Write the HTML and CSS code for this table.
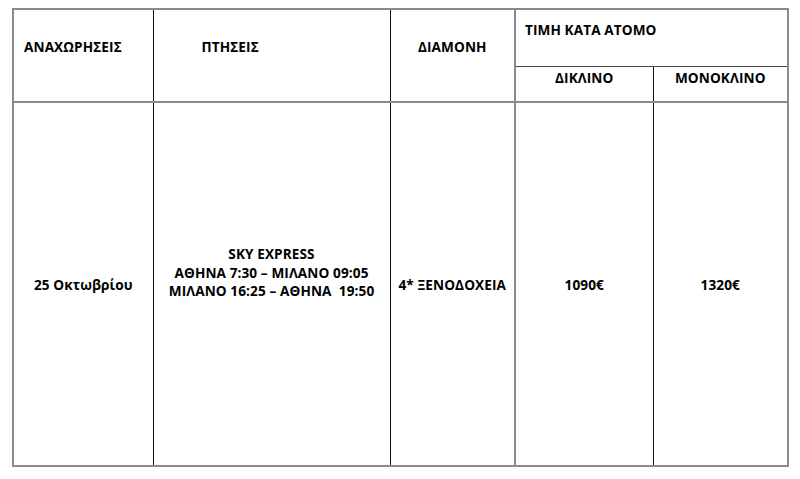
FILE: index.html
```html
<!DOCTYPE html>
<html lang="el">
<head>
<meta charset="utf-8">
<title>Αναχωρήσεις</title>
<link rel="stylesheet" href="styles.css">
</head>
<body>
<table class="tours">
  <colgroup>
    <col class="c-dep">
    <col class="c-fly">
    <col class="c-stay">
    <col class="c-dbl">
    <col class="c-sgl">
  </colgroup>
  <thead>
    <tr class="h1">
      <th rowspan="2" class="th-dep">ΑΝΑΧΩΡΗΣΕΙΣ</th>
      <th rowspan="2" class="th-fly">ΠΤΗΣΕΙΣ</th>
      <th rowspan="2" class="th-stay">ΔΙΑΜΟΝΗ</th>
      <th colspan="2" class="th-price">ΤΙΜΗ ΚΑΤΑ ΑΤΟΜΟ</th>
    </tr>
    <tr class="h2">
      <th class="th-dbl">ΔΙΚΛΙΝΟ</th>
      <th class="th-sgl">ΜΟΝΟΚΛΙΝΟ</th>
    </tr>
  </thead>
  <tbody>
    <tr class="body-row">
      <td class="td-dep">25 Οκτωβρίου</td>
      <td class="td-fly">SKY EXPRESS<br>ΑΘΗΝΑ 7:30 – ΜΙΛΑΝΟ 09:05<br>ΜΙΛΑΝΟ 16:25 – ΑΘΗΝΑ&nbsp; 19:50</td>
      <td class="td-stay">4* ΞΕΝΟΔΟΧΕΙΑ</td>
      <td class="td-dbl">1090€</td>
      <td class="td-sgl">1320€</td>
    </tr>
  </tbody>
</table>
</body>
</html>
```

FILE: styles.css
```css
html, body {
  margin: 0;
  padding: 0;
  background: #ffffff;
}

body {
  font-family: "Open Sans", "Noto Sans", "Liberation Sans", sans-serif;
  font-weight: 700;
  font-size: 13.6px;
  letter-spacing: 0.1px;
  color: #000;
  line-height: 18.5px;
}

.tours {
  margin: 8px 0 0 12px;
  border-collapse: collapse;
  table-layout: fixed;
  width: 775px;
  border: 2px solid #8a8a8a;
}

.c-dep { width: 140px; }
.c-fly { width: 237px; }
.c-stay { width: 125px; }
.c-dbl { width: 138px; }
.c-sgl { width: 135px; }

.tours th,
.tours td {
  border: 1px solid #111;
  padding: 0;
  font-weight: 700;
}

.h1 { height: 57px; }
.h2 { height: 36px; }
.body-row { height: 364px; }

.tours thead th {
  vertical-align: top;
  border-bottom: 2px solid #8a8a8a;
}

.th-dep {
  text-align: left;
  padding: 28px 0 0 10px !important;
}

.th-fly {
  text-align: left;
  padding: 28px 0 0 48px !important;
}

.th-stay {
  text-align: center;
  padding: 28px 0 0 !important;
}

.th-price {
  text-align: left;
  padding: 11px 0 0 9px !important;
  border-bottom: 1px solid #444 !important;
  border-left: 2px solid #8a8a8a !important;
}

.th-dbl,
.th-sgl {
  text-align: center;
  padding: 2px 0 0 !important;
}

.th-dbl {
  border-left: 2px solid #8a8a8a !important;
}

.tours td {
  vertical-align: middle;
  text-align: center;
}

.td-dep,
.td-stay,
.td-dbl,
.td-sgl {
  padding-top: 3px !important;
}

.td-fly {
  padding-bottom: 22px !important;
}

.td-dbl {
  border-left: 2px solid #8a8a8a !important;
}
```
